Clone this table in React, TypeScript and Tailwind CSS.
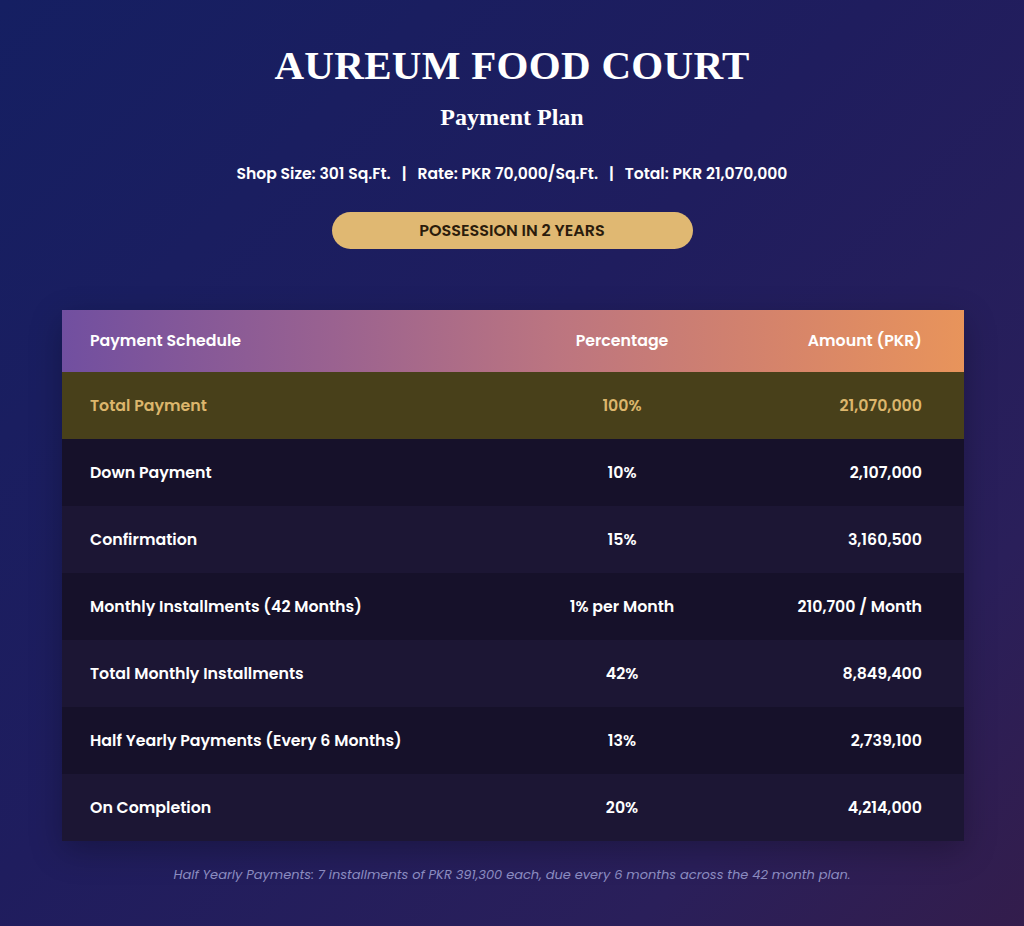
const rows = [
  { label: "Down Payment", pct: "10%", amount: "2,107,000" },
  { label: "Confirmation", pct: "15%", amount: "3,160,500" },
  { label: "Monthly Installments (42 Months)", pct: "1% per Month", amount: "210,700 / Month" },
  { label: "Total Monthly Installments", pct: "42%", amount: "8,849,400" },
  { label: "Half Yearly Payments (Every 6 Months)", pct: "13%", amount: "2,739,100" },
  { label: "On Completion", pct: "20%", amount: "4,214,000" },
];

export default function App() {
  return (
    <div
      className="w-[1024px] h-[926px] overflow-hidden bg-[linear-gradient(135deg,#151f62_0%,#1f1d5e_45%,#2a1f5a_80%,#331d4c_100%)] text-white"
      style={{ fontFamily: "Poppins, Inter, 'Noto Sans', sans-serif" }}
    >
      <div className="flex flex-col items-center pt-[40px]">
        <h1 className="font-['Liberation_Serif',serif] text-[41px] leading-[50px] font-bold tracking-[0.3px]">
          AUREUM FOOD COURT
        </h1>
        <h2 className="mt-[12px] font-['Liberation_Serif',serif] text-[24px] leading-[30px] font-bold">
          Payment Plan
        </h2>
        <p className="mt-[32px] text-[15.6px] leading-[20px] font-semibold">
          Shop Size: 301 Sq.Ft.<span className="mx-[11px]">|</span>Rate: PKR 70,000/Sq.Ft.<span className="mx-[11px]">|</span>Total: PKR 21,070,000
        </p>
        <div className="mt-[28px] w-[361px] h-[37px] rounded-full bg-[#e0b872] flex items-center justify-center text-[#2b1c0c] text-[16px] font-semibold">
          POSSESSION IN 2 YEARS
        </div>
      </div>

      <div className="ml-[62px] w-[902px] mt-[61px] shadow-[0_10px_30px_rgba(0,0,0,0.25)]">
        <div className="grid grid-cols-[1fr_200px_200px] items-center h-[62px] pl-[28px] pr-[42px] bg-[linear-gradient(90deg,#714fa0_0%,#9a6290_30%,#bc7580_55%,#d6846a_80%,#e8945b_100%)] text-[15.8px] font-semibold">
          <span>Payment Schedule</span>
          <span className="text-center">Percentage</span>
          <span className="text-right">Amount (PKR)</span>
        </div>
        <div className="grid grid-cols-[1fr_200px_200px] items-center h-[67px] pl-[28px] pr-[42px] bg-[#48401a] text-[#dcb66c] text-[15.8px] font-semibold">
          <span>Total Payment</span>
          <span className="text-center">100%</span>
          <span className="text-right">21,070,000</span>
        </div>
        {rows.map((r, i) => (
          <div
            key={r.label}
            className={`grid grid-cols-[1fr_200px_200px] items-center h-[67px] pl-[28px] pr-[42px] text-[15.8px] font-semibold ${
              i % 2 === 0 ? "bg-[#16112a]" : "bg-[#1c1634]"
            }`}
          >
            <span>{r.label}</span>
            <span className="text-center">{r.pct}</span>
            <span className="text-right">{r.amount}</span>
          </div>
        ))}
      </div>

      <p className="mt-[24px] text-center italic text-[13px] text-[#8b8cc0]">
        Half Yearly Payments: 7 installments of PKR 391,300 each, due every 6 months across the 42 month plan.
      </p>
    </div>
  );
}
